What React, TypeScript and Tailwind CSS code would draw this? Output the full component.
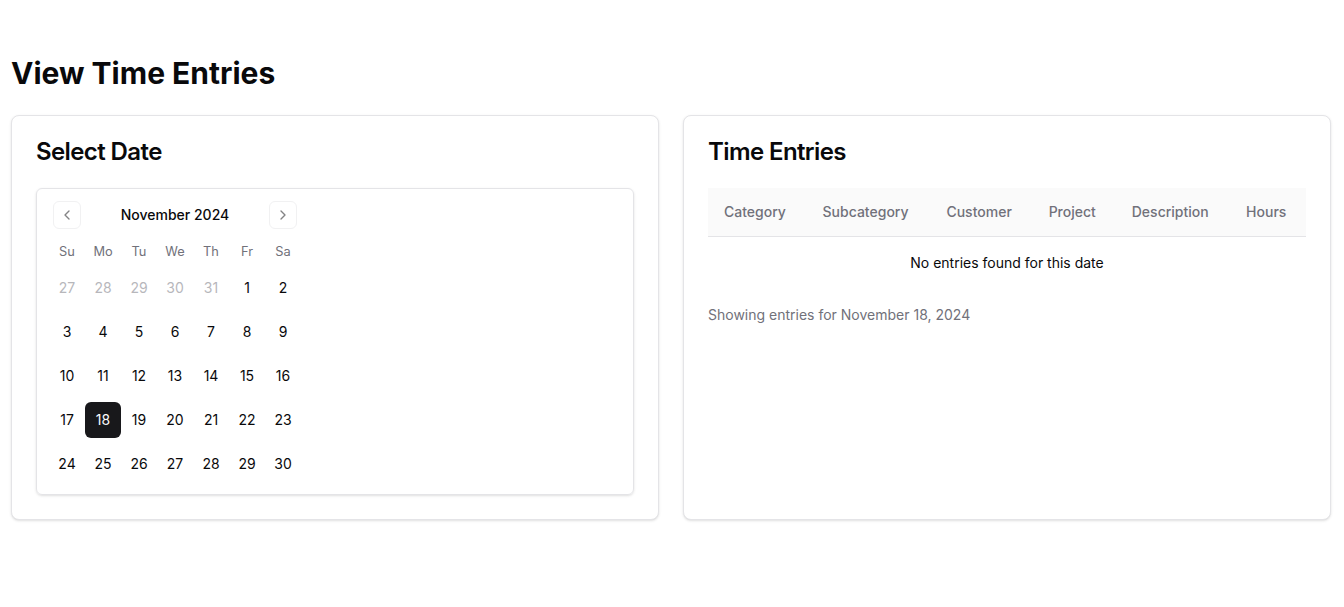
import React from "react";

const font = { fontFamily: "Inter, 'Noto Sans', sans-serif" };

function ChevronLeft() {
  return (
    <svg width="16" height="16" viewBox="0 0 24 24" fill="none" stroke="currentColor" strokeWidth="2" strokeLinecap="round" strokeLinejoin="round">
      <path d="m15 18-6-6 6-6" />
    </svg>
  );
}
function ChevronRight() {
  return (
    <svg width="16" height="16" viewBox="0 0 24 24" fill="none" stroke="currentColor" strokeWidth="2" strokeLinecap="round" strokeLinejoin="round">
      <path d="m9 18 6-6-6-6" />
    </svg>
  );
}

const weeks: { d: number; out?: boolean }[][] = [
  [{ d: 27, out: true }, { d: 28, out: true }, { d: 29, out: true }, { d: 30, out: true }, { d: 31, out: true }, { d: 1 }, { d: 2 }],
  [3, 4, 5, 6, 7, 8, 9].map((d) => ({ d })),
  [10, 11, 12, 13, 14, 15, 16].map((d) => ({ d })),
  [17, 18, 19, 20, 21, 22, 23].map((d) => ({ d })),
  [24, 25, 26, 27, 28, 29, 30].map((d) => ({ d })),
];

function Calendar() {
  return (
    <div className="w-full rounded-md border border-[#e4e4e7] shadow p-3">
      <div className="w-[252px]">
        <div className="relative flex h-7 items-center justify-center">
          <button className="absolute left-1 top-0 flex h-7 w-7 items-center justify-center rounded-md border border-[#e4e4e7] text-[#09090b] opacity-50">
            <ChevronLeft />
          </button>
          <span className="text-sm font-medium text-[#09090b]">November 2024</span>
          <button className="absolute right-1 top-0 flex h-7 w-7 items-center justify-center rounded-md border border-[#e4e4e7] text-[#09090b] opacity-50">
            <ChevronRight />
          </button>
        </div>
        <div className="mt-[14px] flex h-[17px] items-center">
          {["Su", "Mo", "Tu", "We", "Th", "Fr", "Sa"].map((w) => (
            <div key={w} className="w-9 text-center text-[0.8rem] text-[#71717a]">
              {w}
            </div>
          ))}
        </div>
        {weeks.map((wk, i) => (
          <div key={i} className={(i === 0 ? "mt-[10px]" : "mt-2") + " flex"}>
            {wk.map((c, j) => {
              const sel = !c.out && c.d === 18;
              return (
                <div
                  key={j}
                  className={
                    "flex h-9 w-9 items-center justify-center rounded-md text-sm " +
                    (sel ? "bg-[#18181b] text-[#fafafa]" : c.out ? "text-[#71717a] opacity-50" : "text-[#09090b]")
                  }
                >
                  {c.d}
                </div>
              );
            })}
          </div>
        ))}
      </div>
    </div>
  );
}

export default function App() {
  return (
    <div className="min-h-screen bg-white pl-[11px] pr-[13px] pt-[55px]" style={font}>
      <h1 className="mb-6 text-3xl font-bold text-[#09090b]">View Time Entries</h1>
      <div className="grid grid-cols-2 gap-6">
        <div className="rounded-lg border border-[#e4e4e7] bg-white shadow-sm">
          <div className="p-6">
            <h2 className="text-2xl font-semibold leading-none tracking-tight text-[#09090b]">Select Date</h2>
          </div>
          <div className="px-6 pb-6">
            <Calendar />
          </div>
        </div>
        <div className="rounded-lg border border-[#e4e4e7] bg-white shadow-sm">
          <div className="p-6">
            <h2 className="text-2xl font-semibold leading-none tracking-tight text-[#09090b]">Time Entries</h2>
          </div>
          <div className="px-6 pb-6">
            <table className="w-full text-sm">
              <thead>
                <tr className="border-b border-[#e4e4e7] bg-[#fafafa]">
                  {["Category", "Subcategory", "Customer", "Project", "Description", "Hours"].map((h) => (
                    <th key={h} className="h-12 px-4 text-left align-middle font-medium text-[#71717a]">
                      {h}
                    </th>
                  ))}
                </tr>
              </thead>
              <tbody>
                <tr>
                  <td colSpan={6} className="p-4 text-center text-[#09090b]">
                    No entries found for this date
                  </td>
                </tr>
              </tbody>
            </table>
            <p className="mt-4 text-sm text-[#71717a]">Showing entries for November 18, 2024</p>
          </div>
        </div>
      </div>
    </div>
  );
}
